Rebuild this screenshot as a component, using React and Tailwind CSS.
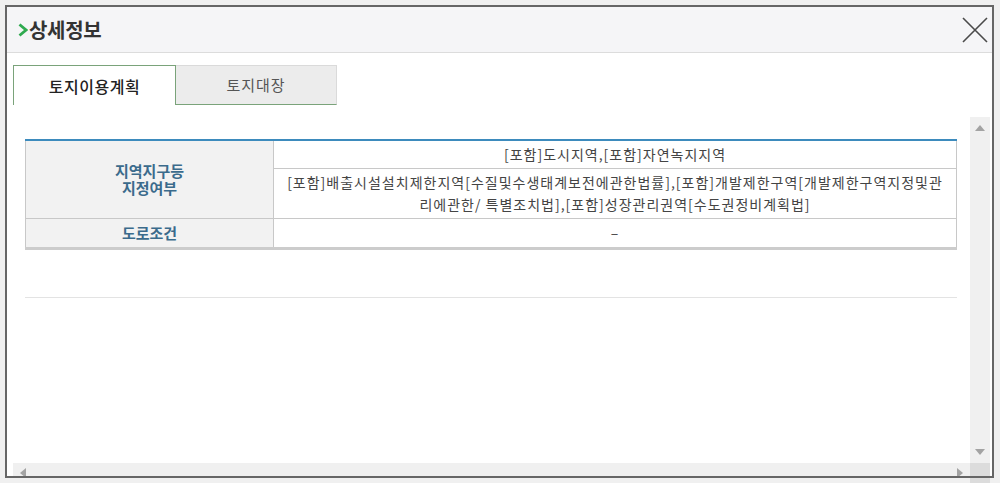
const font = { fontFamily: '"Noto Sans CJK KR", "Noto Sans", sans-serif' }

function Chevron() {
  return (
    <svg width="10" height="14" viewBox="0 0 10 14" className="shrink-0">
      <path d="M1.5 1.5 L8 7 L1.5 12.5" fill="none" stroke="#2faa4f" strokeWidth="2.8" />
    </svg>
  )
}

function CloseIcon() {
  return (
    <svg width="26" height="26" viewBox="0 0 26 26">
      <path d="M1 1 L25 25 M25 1 L1 25" stroke="#4a4a4a" strokeWidth="1.6" fill="none" />
    </svg>
  )
}

function Tri({ dir }) {
  const d = {
    up: 'M0 6 L5 0 L10 6 Z',
    down: 'M0 0 L10 0 L5 6 Z',
    left: 'M6 0 L6 10 L0 5 Z',
    right: 'M0 0 L6 5 L0 10 Z',
  }[dir]
  const horiz = dir === 'left' || dir === 'right'
  return (
    <svg width={horiz ? 6 : 10} height={horiz ? 10 : 6} viewBox={horiz ? '0 0 6 10' : '0 0 10 6'}>
      <path d={d} fill="#a3a3a3" />
    </svg>
  )
}

const th = 'bg-[#f2f2f2] border border-[#c8c8c8] text-[15px] font-bold text-[#3b6b8c] leading-[17px] text-center align-middle'
const td = 'border border-[#c8c8c8] text-[14px] text-[#444] tracking-[1px] text-center align-middle'

export default function App() {
  return (
    <div className="w-[1000px] h-[483px] overflow-hidden bg-[#f0f0f0] pt-[5px] pl-[5px]" style={font}>
      <div className="relative w-[989px] h-[473px] bg-white flex flex-col">
        <div className="absolute inset-0 border-2 border-[#666] pointer-events-none z-10" />

        <div className="mx-[2px] mt-[2px] h-[46px] shrink-0 bg-[#f5f5f7] border-b border-[#dcdcdc] flex items-center justify-between pl-[11px] pr-[4px]">
          <div className="flex items-center gap-[1px]">
            <Chevron />
            <span className="text-[20px] font-bold text-[#333] tracking-[-0.3px]">상세정보</span>
          </div>
          <CloseIcon />
        </div>

        <div className="flex mt-[12px] ml-[8px] h-[40px] shrink-0">
          <div className="w-[163px] bg-white border border-b-0 border-[#7aa37a] flex items-center justify-center text-[16px] font-medium tracking-[0.5px] text-[#222]">
            토지이용계획
          </div>
          <div className="w-[161px] bg-[#ececec] border-t border-r border-[#dadada] border-b-[1px] border-b-[#7aa37a] flex items-center justify-center text-[15px] tracking-[1px] text-[#555]">
            토지대장
          </div>
        </div>

        <div className="flex mt-[12px] ml-[8px] h-[366px] shrink-0">
          <div className="w-[957px] flex flex-col">
            <div className="h-[346px] pt-[22px] pl-[12px] pr-[13px]">
              <table className="w-[932px] border-collapse border-t-2 border-t-[#3d8bbd] border-b-[3px] border-b-[#cccccc]">
                <tbody>
                  <tr className="h-[28px]">
                    <th rowSpan={2} className={th + ' w-[248px]'}>
                      지역지구등
                      <br />
                      지정여부
                    </th>
                    <td className={td + ' border-t-0'}>[포함]도시지역,[포함]자연녹지지역</td>
                  </tr>
                  <tr className="h-[50px]">
                    <td className={td + ' leading-[22px] px-[4px]'}>
                      [포함]배출시설설치제한지역[수질및수생태계보전에관한법률],[포함]개발제한구역[개발제한구역지정및관
                      <br />
                      리에관한/ 특별조치법],[포함]성장관리권역[수도권정비계획법]
                    </td>
                  </tr>
                  <tr className="h-[30px]">
                    <th className={th}>도로조건</th>
                    <td className={td}>–</td>
                  </tr>
                </tbody>
              </table>
              <div className="mt-[47px] w-[932px] h-px bg-[#e3e3e3]" />
            </div>
            <div className="h-[20px] bg-[#f0f0f0] flex items-center justify-between px-[7px]">
              <Tri dir="left" />
              <Tri dir="right" />
            </div>
          </div>
          <div className="w-[20px] flex flex-col">
            <div className="h-[346px] bg-[#f0f0f0] flex flex-col items-center justify-between py-[8px]">
              <Tri dir="up" />
              <Tri dir="down" />
            </div>
            <div className="h-[20px] bg-[#dcdcdc]" />
          </div>
        </div>
      </div>
    </div>
  )
}
